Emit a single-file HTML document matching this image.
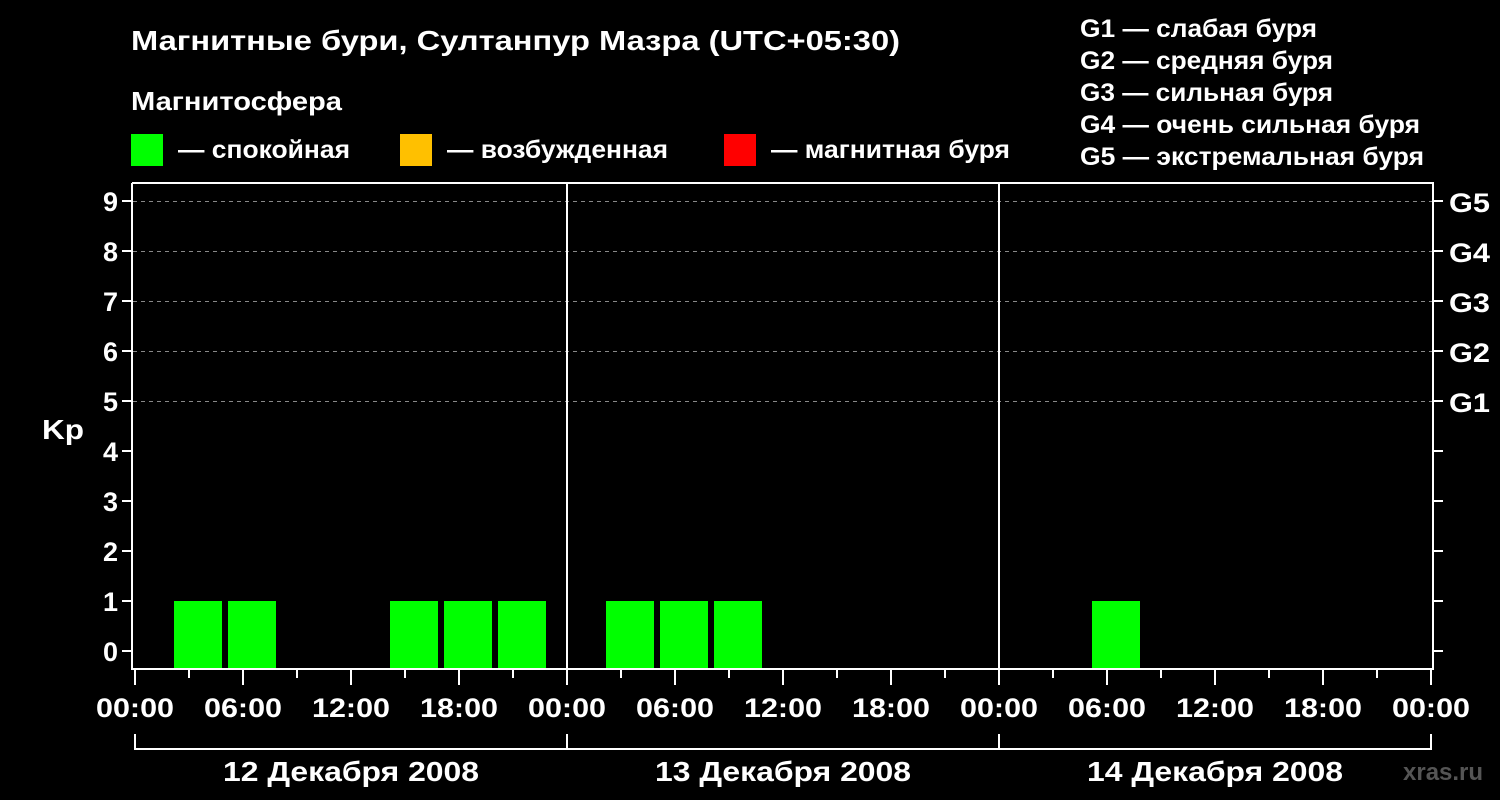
<!DOCTYPE html><html><head><meta charset="utf-8"><style>body{margin:0;background:#000}svg{display:block}text{font-family:"Liberation Sans",sans-serif;font-weight:bold;fill:#fff}</style></head><body>
<svg width="1500" height="800" viewBox="0 0 1500 800">
<rect width="1500" height="800" fill="#000"/>
<text x="131" y="50" font-size="28" textLength="769" lengthAdjust="spacingAndGlyphs">Магнитные бури, Султанпур Мазра (UTC+05:30)</text>
<text x="131" y="110" font-size="26" textLength="211" lengthAdjust="spacingAndGlyphs">Магнитосфера</text>
<rect x="131" y="134" width="32" height="32" fill="#00ff00"/><text x="178" y="158" font-size="25" textLength="172" lengthAdjust="spacingAndGlyphs">— спокойная</text>
<rect x="400" y="134" width="32" height="32" fill="#ffc000"/><text x="447" y="158" font-size="25" textLength="221" lengthAdjust="spacingAndGlyphs">— возбужденная</text>
<rect x="724" y="134" width="32" height="32" fill="#ff0000"/><text x="771" y="158" font-size="25" textLength="239" lengthAdjust="spacingAndGlyphs">— магнитная буря</text>
<g font-size="25" lengthAdjust="spacingAndGlyphs"><text x="1080" y="37" textLength="237" lengthAdjust="spacingAndGlyphs">G1 — слабая буря</text><text x="1080" y="69" textLength="253" lengthAdjust="spacingAndGlyphs">G2 — средняя буря</text><text x="1080" y="101" textLength="253" lengthAdjust="spacingAndGlyphs">G3 — сильная буря</text><text x="1080" y="133" textLength="340" lengthAdjust="spacingAndGlyphs">G4 — очень сильная буря</text><text x="1080" y="165" textLength="344" lengthAdjust="spacingAndGlyphs">G5 — экстремальная буря</text></g>
<g stroke="#888" stroke-dasharray="4,4" stroke-width="1"><line x1="133" x2="1432" y1="201.5" y2="201.5"/><line x1="133" x2="1432" y1="251.5" y2="251.5"/><line x1="133" x2="1432" y1="301.5" y2="301.5"/><line x1="133" x2="1432" y1="351.5" y2="351.5"/><line x1="133" x2="1432" y1="401.5" y2="401.5"/></g>
<g fill="#00ff00"><rect x="174" y="601" width="48" height="67"/><rect x="228" y="601" width="48" height="67"/><rect x="390" y="601" width="48" height="67"/><rect x="444" y="601" width="48" height="67"/><rect x="498" y="601" width="48" height="67"/><rect x="606" y="601" width="48" height="67"/><rect x="660" y="601" width="48" height="67"/><rect x="714" y="601" width="48" height="67"/><rect x="1092" y="601" width="48" height="67"/></g>
<g stroke="#fff" stroke-width="2" fill="none">
<path d="M132 183V669H1433V183H132"/><path d="M567 183V668M999 183V668"/>
<path d="M122 201H132M122 251H132M122 301H132M122 351H132M122 401H132M122 451H132M122 501H132M122 551H132M122 601H132M122 651H132"/>
<path d="M1433 201H1443M1433 251H1443M1433 301H1443M1433 351H1443M1433 401H1443M1433 451H1443M1433 501H1443M1433 551H1443M1433 601H1443M1433 651H1443"/>
<path d="M135 670V685M243 670V685M351 670V685M459 670V685M567 670V685M675 670V685M783 670V685M891 670V685M999 670V685M1107 670V685M1215 670V685M1323 670V685M1431 670V685"/>
<path d="M189 670V678M297 670V678M405 670V678M513 670V678M621 670V678M729 670V678M837 670V678M945 670V678M1053 670V678M1161 670V678M1269 670V678M1377 670V678"/>
<path d="M135 734V749H1431V734M567 734V749M999 734V749"/>
</g>
<g font-size="27" text-anchor="end"><text x="118" y="211">9</text><text x="118" y="261">8</text><text x="118" y="311">7</text><text x="118" y="361">6</text><text x="118" y="411">5</text><text x="118" y="461">4</text><text x="118" y="511">3</text><text x="118" y="561">2</text><text x="118" y="611">1</text><text x="118" y="661">0</text></g>
<text x="42" y="439" font-size="28" textLength="42" lengthAdjust="spacingAndGlyphs">Kp</text>
<g font-size="27"><text x="1449" y="212" textLength="41" lengthAdjust="spacingAndGlyphs">G5</text><text x="1449" y="262" textLength="41" lengthAdjust="spacingAndGlyphs">G4</text><text x="1449" y="312" textLength="41" lengthAdjust="spacingAndGlyphs">G3</text><text x="1449" y="362" textLength="41" lengthAdjust="spacingAndGlyphs">G2</text><text x="1449" y="412" textLength="41" lengthAdjust="spacingAndGlyphs">G1</text></g>
<g font-size="27" text-anchor="middle"><text x="135" y="717" textLength="78" lengthAdjust="spacingAndGlyphs">00:00</text><text x="243" y="717" textLength="78" lengthAdjust="spacingAndGlyphs">06:00</text><text x="351" y="717" textLength="78" lengthAdjust="spacingAndGlyphs">12:00</text><text x="459" y="717" textLength="78" lengthAdjust="spacingAndGlyphs">18:00</text><text x="567" y="717" textLength="78" lengthAdjust="spacingAndGlyphs">00:00</text><text x="675" y="717" textLength="78" lengthAdjust="spacingAndGlyphs">06:00</text><text x="783" y="717" textLength="78" lengthAdjust="spacingAndGlyphs">12:00</text><text x="891" y="717" textLength="78" lengthAdjust="spacingAndGlyphs">18:00</text><text x="999" y="717" textLength="78" lengthAdjust="spacingAndGlyphs">00:00</text><text x="1107" y="717" textLength="78" lengthAdjust="spacingAndGlyphs">06:00</text><text x="1215" y="717" textLength="78" lengthAdjust="spacingAndGlyphs">12:00</text><text x="1323" y="717" textLength="78" lengthAdjust="spacingAndGlyphs">18:00</text><text x="1431" y="717" textLength="78" lengthAdjust="spacingAndGlyphs">00:00</text>
<text x="351" y="781" font-size="28" textLength="256" lengthAdjust="spacingAndGlyphs">12 Декабря 2008</text><text x="783" y="781" font-size="28" textLength="256" lengthAdjust="spacingAndGlyphs">13 Декабря 2008</text><text x="1215" y="781" font-size="28" textLength="256" lengthAdjust="spacingAndGlyphs">14 Декабря 2008</text></g>
<text x="1403" y="780" font-size="24" style="fill:#555">xras.ru</text>
</svg></body></html>
